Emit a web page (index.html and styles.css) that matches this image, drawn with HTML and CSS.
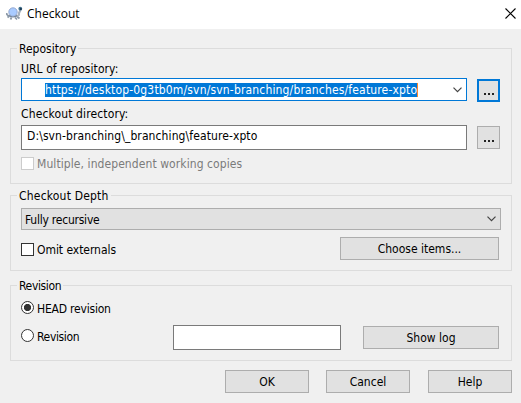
FILE: index.html
```html
<!DOCTYPE html>
<html lang="en">
<head>
<meta charset="utf-8">
<title>Checkout</title>
<link rel="stylesheet" href="styles.css">
</head>
<body>
<header class="titlebar">
  <svg class="app-icon" width="17" height="15" viewBox="0 0 17 15">
    <path d="M.5 7q0 2.500 3 3M3.500 10l-2 1.500M5.500 11.500l-1 2M9 11.500l2 2M10.500 10l3 2.500" stroke="#8c99a8" stroke-width="1.700" fill="none"/>
    <path d="M10 9.500q3.500 1 3-2.500L14.500 4" stroke="#a9b3bf" stroke-width="2.200" fill="none"/>
    <circle cx="7" cy="6" r="4.200" fill="#a9cbff" stroke="#8ea3cc" stroke-width=".9"/>
    <path d="M3 9.500q4 3 8 0" stroke="#75859a" stroke-width="1.200" fill="none"/>
    <circle cx="14.300" cy="2.700" r="1.900" fill="#41708f"/>
    <path d="M14.300 2h1.200v2h-1.200z" fill="#12283c"/>
  </svg>
  <h1 class="title">Checkout</h1>
  <svg class="close" width="11" height="11" viewBox="0 0 11 11"><path d="M.5.500l10 10M10.500.500l-10 10" stroke="#000" stroke-width="1.100"/></svg>
</header>
<main class="dialog">
  <section class="group repository">
    <h2 class="legend">Repository</h2>
    <div class="label t-url">URL of repository:</div>
    <div class="row">
      <div class="combo"><span class="selected t-address">https://desktop-0g3tb0m/svn/svn-branching/branches/feature-xpto</span>
        <svg class="chevron" width="9" height="6" viewBox="0 0 9 6"><path d="M.5.700l4 4 4-4" fill="none" stroke="#444" stroke-width="1.200"/></svg>
      </div>
      <button class="button browse focused"><i></i><i></i><i></i></button>
    </div>
    <div class="label directory-label t-directory">Checkout directory:</div>
    <div class="row">
      <div class="field directory t-path">D:\svn-branching\_branching\feature-xpto</div>
      <button class="button browse"><i></i><i></i><i></i></button>
    </div>
    <div class="option multiple disabled"><span class="box"></span><span class="text t-multiple">Multiple, independent working copies</span></div>
  </section>
  <section class="group depth">
    <h2 class="legend t-depth">Checkout Depth</h2>
    <div class="select"><span class="text t-recursive">Fully recursive</span>
      <svg class="chevron" width="9" height="6" viewBox="0 0 9 6"><path d="M.5.700l4 4 4-4" fill="none" stroke="#444" stroke-width="1.200"/></svg>
    </div>
    <div class="row split depth-row">
      <div class="option"><span class="box"></span><span class="text t-omit">Omit externals</span></div>
      <button class="button choose"><span class="text">Choose items...</span></button>
    </div>
  </section>
  <section class="group revision">
    <h2 class="legend t-revision">Revision</h2>
    <div class="option head"><span class="radio checked"></span><span class="text t-head">HEAD revision</span></div>
    <div class="row split revision-row">
      <div class="option"><span class="radio"></span><span class="text t-revision">Revision</span></div>
      <div class="field number"></div>
      <button class="button log"><span class="text">Show log</span></button>
    </div>
  </section>
  <footer class="actions">
    <button class="button"><span class="text">OK</span></button>
    <button class="button cancel"><span class="text">Cancel</span></button>
    <button class="button help"><span class="text">Help</span></button>
  </footer>
</main>
</body>
</html>
```
FILE: styles.css
```css
* { box-sizing: border-box; }
body {
  margin: 0;
  height: 403px;
  overflow: hidden;
  background: #f0f0f0;
  color: #000;
  font: 12px/15px "DejaVu Sans Condensed", "DejaVu Sans", sans-serif;
  font-stretch: condensed;
  white-space: nowrap;
}
.titlebar {
  display: flex;
  height: 29px;
  padding: 6px 5px 0 6px;
  background: #fff;
}
.app-icon { flex: none; }
.title {
  margin: 0 auto 0 4px;
  font: 12px/16px "Open Sans", "Noto Sans", sans-serif;
}
.close { margin-top: 2px; }
.dialog { padding: 19px 9px 0 10px; }
.group {
  position: relative;
  border: 1px solid #dcdcdc;
  padding-left: 10px;
}
.repository { height: 136px; padding-top: 12px; }
.depth { height: 76px; margin-top: 11px; padding-top: 12px; }
.revision { height: 76px; margin-top: 14px; padding-top: 15px; }
.legend {
  position: absolute;
  top: -7px;
  left: 6px;
  margin: 0;
  padding: 0 2px;
  background: #f0f0f0;
  font: inherit;
}
.label { height: 17px; padding-top: 1px; }
.directory-label { height: 19px; margin-top: 5px; }
.row { display: flex; align-items: center; gap: 10px; }
.combo, .field { background: #fff; border: 1px solid #7a7a7a; }
.combo {
  display: flex;
  align-items: center;
  width: 446px;
  height: 23px;
  padding: 0 4px 0 23px;
  border-color: #0078d7;
}
.selected {
  height: 14px;
  line-height: 14px;
  width: 373px;
  background: #0078d7;
  color: #fff;
  border-right: 1px solid #ff8728;
}
.chevron { margin-left: auto; }
.field { height: 25px; }
.directory { width: 446px; padding: 3px 5px; }
.button {
  display: flex;
  justify-content: center;
  align-items: center;
  width: 84px;
  height: 23px;
  padding: 0;
  border: 1px solid #adadad;
  border-radius: 0;
  background: #e1e1e1;
  color: #000;
  font: inherit;
}
.text { padding-top: 2px; }
.browse { width: 23px; gap: 2px; padding-top: 7px; }
.browse i { width: 2px; height: 2px; background: #222; }
.focused { border: 2px solid #0078d7; margin: 1px 0 -1px; }
.option { display: flex; align-items: center; gap: 3px; height: 15px; }
.multiple { margin-top: 6px; }
.disabled { color: #7b7b7b; }
.box, .radio {
  flex: none;
  width: 13px;
  height: 13px;
  border: 1px solid #333;
  background: #fff;
}
.disabled .box { border-color: #ccc; }
.radio { border-radius: 50%; margin-bottom: 2px; }
.checked { background: radial-gradient(circle, #333 0 3.300px, #fff 3.900px); }
.select {
  display: flex;
  align-items: center;
  width: 480px;
  height: 22px;
  padding: 0 4px 0 3px;
  border: 1px solid #adadad;
  background: #e1e1e1;
}
.split { justify-content: space-between; gap: 0; width: 478px; }
.depth-row { margin-top: 7px; }
.depth-row .option { margin-top: 2px; }
.choose { width: 159px; }
.revision-row { margin-top: 9px; }
.revision-row .option { width: 152px; margin-bottom: 2px; }
.number { width: 168px; }
.log { width: 136px; margin-left: auto; }
.actions { display: flex; justify-content: flex-end; margin-top: 9px; }
.cancel { margin-left: 17px; }
.help { margin-left: 18px; }

.t-url { letter-spacing: .08px; }
.t-address { letter-spacing: .165px; }
.t-directory { letter-spacing: .13px; }
.t-path { letter-spacing: .1px; }
.t-multiple { letter-spacing: .08px; }
.t-depth { letter-spacing: .2px; }
.t-recursive { letter-spacing: -.23px; }
.t-omit { letter-spacing: -.05px; }
.t-head { letter-spacing: -.2px; }
.t-revision { letter-spacing: -.35px; }
```
